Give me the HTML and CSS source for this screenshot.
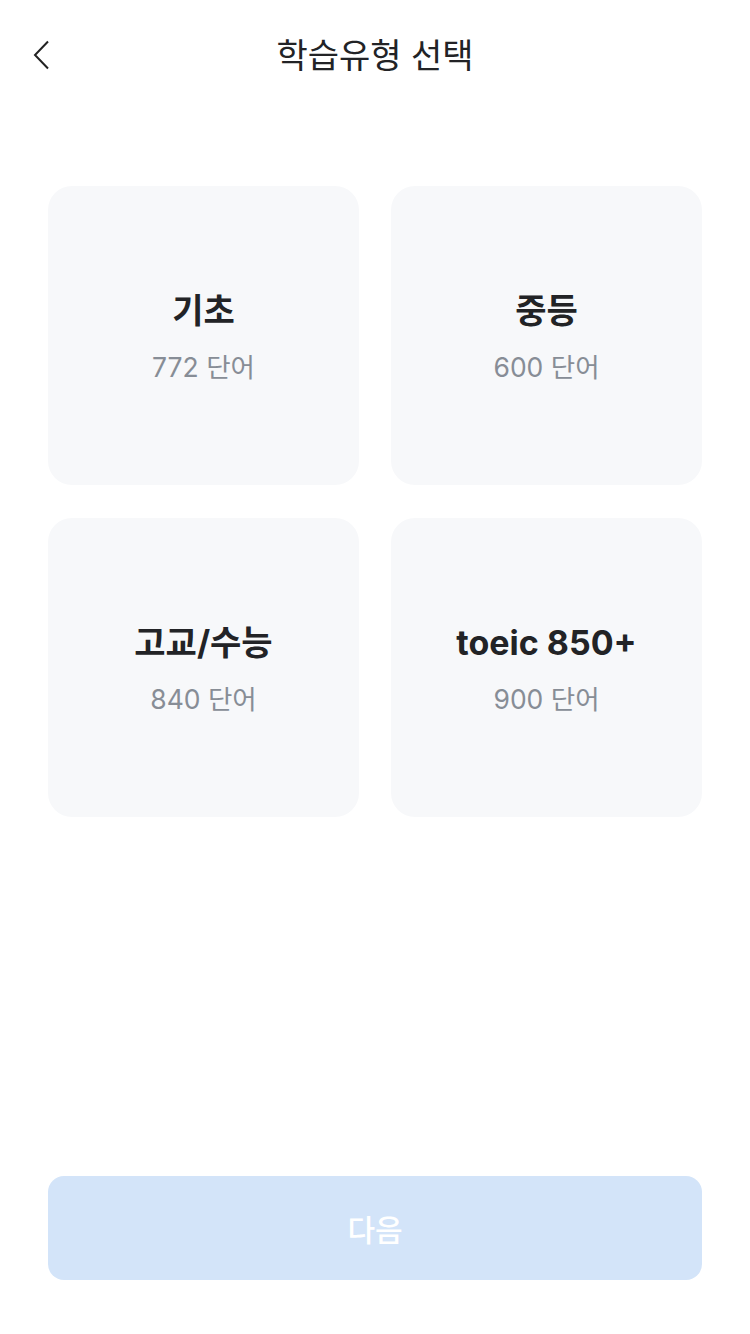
FILE: index.html
```html
<!DOCTYPE html>
<html lang="ko">
<head>
<meta charset="utf-8">
<link rel="stylesheet" href="styles.css">
</head>
<body>
<div class="screen">
  <header class="topbar">
    <button class="back" aria-label="뒤로">
      <svg width="18" height="30" viewBox="0 0 18 30"><path d="M16 1.5 L3 15 L16 28.5" fill="none" stroke="#222" stroke-width="2"/></svg>
    </button>
    <h1 class="title">학습유형 선택</h1>
  </header>
  <main class="grid">
    <div class="card"><div class="card-title">기초</div><div class="card-sub">772 단어</div></div>
    <div class="card"><div class="card-title">중등</div><div class="card-sub">600 단어</div></div>
    <div class="card"><div class="card-title">고교/수능</div><div class="card-sub">840 단어</div></div>
    <div class="card"><div class="card-title">toeic 850+</div><div class="card-sub">900 단어</div></div>
  </main>
  <div class="spacer"></div>
  <footer class="footer">
    <button class="next">다음</button>
  </footer>
</div>
</body>
</html>
```
FILE: styles.css
```css
* { box-sizing: border-box; }
html, body { margin: 0; padding: 0; background: #fff; }
body { font-family: "Inter", "Noto Sans CJK KR", sans-serif; color: #222326; }
.screen { width: 750px; height: 1334px; display: flex; flex-direction: column; }
.topbar { position: relative; height: 110px; display: flex; align-items: center; justify-content: center; }
.back { position: absolute; left: 32px; top: 40px; width: 24px; height: 30px; padding: 0; border: 0; background: none; }
.back svg { display: block; }
.title { margin: 0; font-size: 34px; font-weight: 400; letter-spacing: 0; line-height: 1; margin-top: 2px; }
.grid { display: grid; grid-template-columns: 311px 311px; grid-auto-rows: 299px; column-gap: 32px; row-gap: 33px; padding: 76px 48px 0 48px; }
.card { background: #f7f8fa; border-radius: 24px; display: flex; flex-direction: column; align-items: center; justify-content: center; padding-top: 3px; }
.card-title { font-size: 34px; font-weight: 700; line-height: 1; color: #222326; }
.card-sub { margin-top: 26px; font-size: 26.5px; font-weight: 400; line-height: 1; color: #878d96; }
.spacer { flex: 1; }
.footer { padding: 0 48px 54px 48px; }
.next { width: 100%; height: 104px; border: 0; border-radius: 16px; background: #d3e4f9; color: #fff; font-family: "Inter", "Noto Sans CJK KR", sans-serif; font-size: 30px; font-weight: 500; }
```
